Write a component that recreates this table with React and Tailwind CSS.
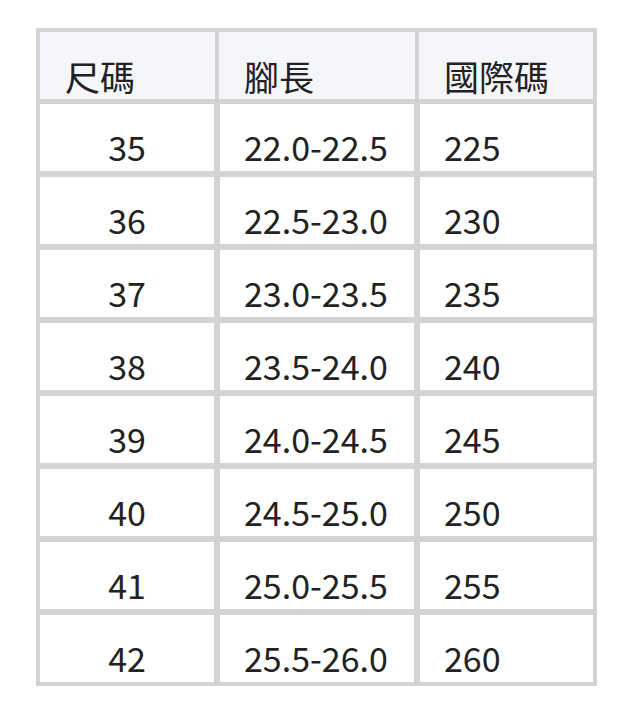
import React from "react";

const rows = [
  ["35", "22.0-22.5", "225"],
  ["36", "22.5-23.0", "230"],
  ["37", "23.0-23.5", "235"],
  ["38", "23.5-24.0", "240"],
  ["39", "24.0-24.5", "245"],
  ["40", "24.5-25.0", "250"],
  ["41", "25.0-25.5", "255"],
  ["42", "25.5-26.0", "260"],
];

const headers = ["尺碼", "腳長", "國際碼"];

export default function App() {
  return (
    <div
      className="min-h-[714px] bg-white pl-9 pt-7 text-[#222]"
      style={{ fontFamily: '"Noto Sans CJK TC", "Noto Sans", sans-serif' }}
    >
      <table className="w-[561px] table-fixed border-separate border-spacing-0 border border-[#d3d3d3]">
        <colgroup>
          <col className="w-[180px]" />
          <col className="w-[200px]" />
          <col className="w-[179px]" />
        </colgroup>
        <thead>
          <tr>
            {headers.map((h, i) => (
              <th
                key={h}
                className={`border-2 border-t-[3px] border-[#d3d3d3] bg-[#f5f6fa] p-0 text-left font-normal ${
                  i === 0 ? "border-l-[3px]" : ""
                } ${i === 2 ? "border-r-[3px]" : ""}`}
              >
                <div className="flex h-[67px] items-end pb-[6px] pl-[25px] text-[35px] leading-none">
                  {h}
                </div>
              </th>
            ))}
          </tr>
        </thead>
        <tbody>
          {rows.map((r) => (
            <tr key={r[0]}>
              <td className="border-[3px] border-[#d3d3d3] p-0">
                <div className="flex h-[67px] items-end justify-center pb-[7px] text-[34px] leading-none">
                  {r[0]}
                </div>
              </td>
              <td className="border-[3px] border-[#d3d3d3] p-0">
                <div className="flex h-[67px] items-end pb-[7px] pl-6 text-[34px] leading-none">
                  {r[1]}
                </div>
              </td>
              <td className="border-[3px] border-[#d3d3d3] p-0">
                <div className="flex h-[67px] items-end pb-[7px] pl-6 text-[34px] leading-none">
                  {r[2]}
                </div>
              </td>
            </tr>
          ))}
        </tbody>
      </table>
    </div>
  );
}
